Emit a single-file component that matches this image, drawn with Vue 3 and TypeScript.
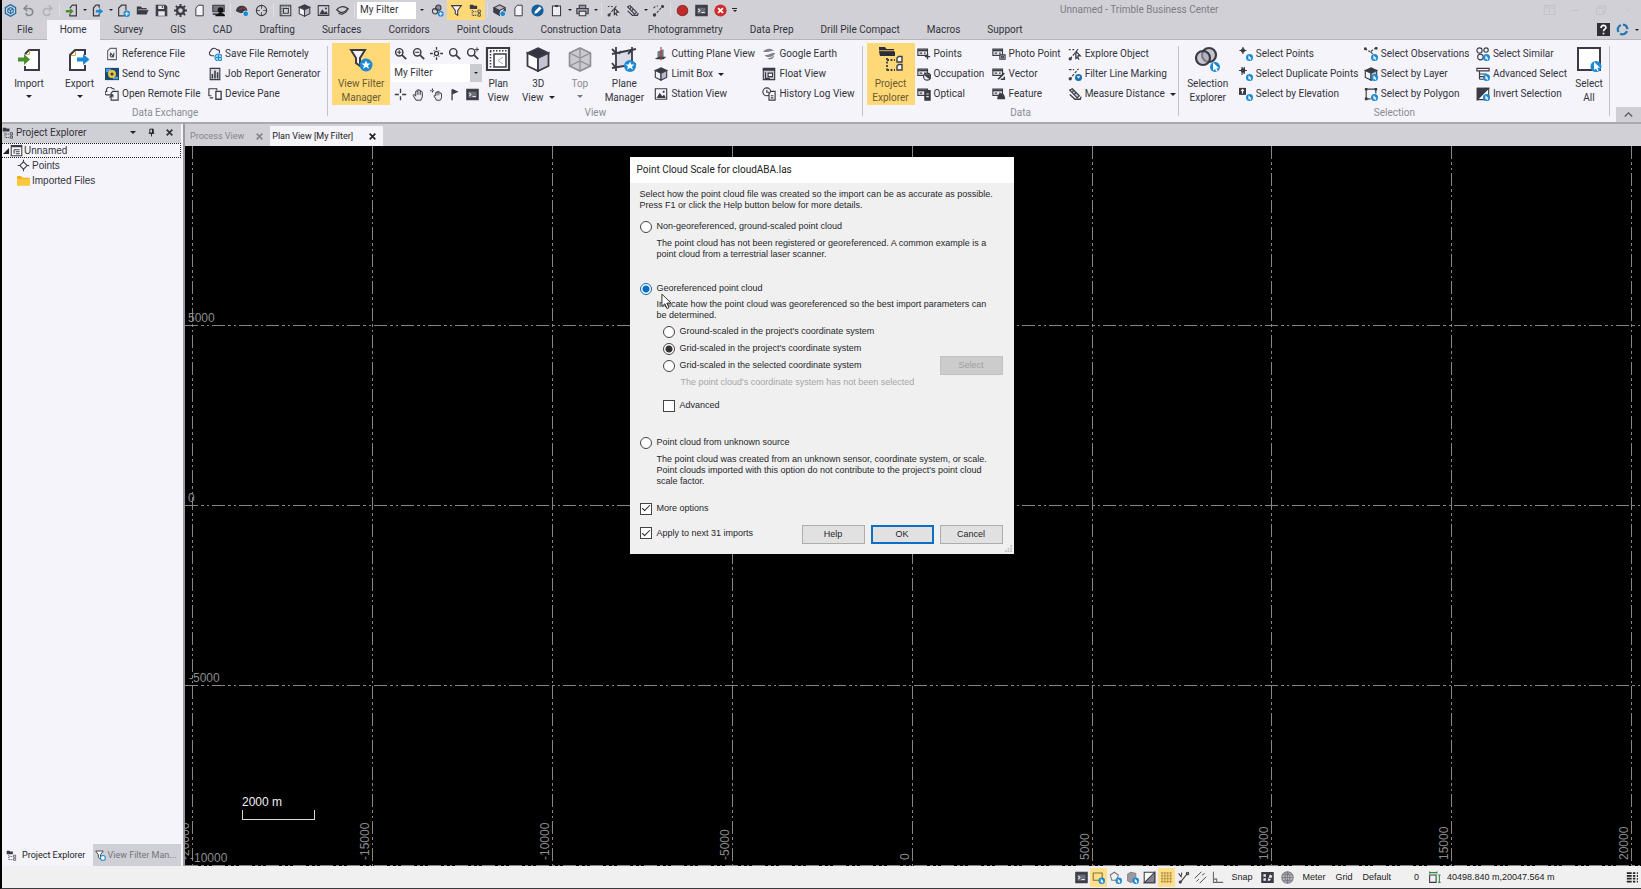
<script setup lang="ts">
import { ref } from 'vue'

interface Tool { icon: string; label: string; menu?: boolean }
interface Big { icon: string; lines: string[]; arrow?: boolean; inlineArrow?: boolean; active?: boolean; disabled?: boolean }
interface Column { big?: Big; stack?: Tool[]; viewTools?: boolean }
interface Group { id: string; label: string; columns: Column[] }
interface Quick { kind: 'icon' | 'arrow' | 'sep' | 'filter' | 'more'; icon?: string; on?: boolean }

const D = '#3b3b46'
const B = '#1b8ad3'
const pick = `<circle cx="12" cy="12" r="4" fill="${B}" stroke="none"/><path d="M10.8 9.4v5l1.2-1 .8 1.6.9-.4-.8-1.6h1.5z" fill="#fff" stroke="none"/>`
const card = `<path d="M1 2.5h11v7H1z"/><path d="M1 4h11" stroke-width="2"/><path d="M3 7h3M8 7h2"/>`
const cube = `<path d="M8 1l6.500 3L8 7.200 1.500 4z" fill="${D}"/><path d="M1.500 4v8L8 15V7.200z" fill="#f4f4fa"/><path d="M8 7.200L14.500 4v8L8 15z" fill="#b9b9c6"/>`
const picture = `<path d="M1.500 2h13v12h-13z"/><path d="M3 12.500l3.500-6 3 4 2-2 2 4z" fill="${D}" stroke="none"/><circle cx="11" cy="5.500" r="1.300" fill="${D}" stroke="none"/>`
const tree = `<path d="M1 1h4l1 1h4v4H1z" fill="${D}" stroke="none"/><path d="M4 7.500v6.500M5 9.500h4M5 14h4" stroke-dasharray="1.500 1.200"/><path d="M11 7.500h3v3h-3zM11 12h3v3h-3z" stroke-width="1"/>`
const lens = `<circle cx="6.500" cy="6.500" r="4.500" stroke-width="1.800"/><path d="M10 10l5 5" stroke-width="2.200"/>`
const chain = `<path d="M2 5l2-2M6 3l1-1M3 14L13 3" stroke-dasharray="3 1.500"/><circle cx="3" cy="13.500" r="1.400" fill="${D}"/><circle cx="13" cy="3" r="1.200" fill="${D}"/>`

const icons: Record<string, string> = {
  logo: `<path d="M8 .8l6.300 3.600v7.200L8 15.200l-6.300-3.600V4.400z" stroke="#1f6fa8" stroke-width="1.600"/><path d="M8 4.300l3.300 1.900v3.700L8 11.800l-3.300-1.900V6.200zM8 8v3.500M8 8l3-1.700M8 8L5 6.300" stroke="#1f6fa8" stroke-width="1.300"/>`,
  undo: `<path d="M3.500 5.500H9a4.300 4.300 0 1 1-4.200 5.500" stroke="#85858e" stroke-width="1.800"/><path d="M6.500 1.500L2.500 5.500l4 3.500" stroke="#85858e" stroke-width="1.800"/>`,
  redo: `<path d="M12.500 5.500H7a4.300 4.300 0 1 0 4.200 5.500" stroke="#b1b1b8" stroke-width="1.800"/><path d="M9.500 1.500l4 4-4 3.500" stroke="#b1b1b8" stroke-width="1.800"/>`,
  importS: `<path d="M6 5l3-3.500h5v13H6V12" stroke-width="1.500"/><path d="M1 7.500h5V5l4.500 4L6 13v-2.500H1z" fill="#4c8f2f" stroke="none"/>`,
  exportS: `<path d="M10 4.500V1.500H6L3 5v9.500h7V12" stroke-width="1.500"/><path d="M6 7.500h4V5l5 4-5 4v-2.500H6z" fill="${B}" stroke="none"/>`,
  newDoc: `<path d="M9 14.500H2V5l3.500-3.500H11V8" stroke-width="1.500"/><circle cx="12" cy="12" r="4" fill="${B}" stroke="none"/><path d="M12 9.500v5M9.500 12h5" stroke="#fff"/>`,
  folder: `<path d="M1 13V3h5l1.500 2H13v2h2.500L13 13z" fill="${D}" stroke="none"/><path d="M2.500 7h12" stroke="#d0d0d5" stroke-width=".8"/>`,
  save: `<path d="M1.500 1.500h11l2 2v11h-13z" fill="${D}"/><path d="M4 2h7v4H4zM4 9h8v5.500H4z" fill="#e6e6ec" stroke="none"/><path d="M9 2.500v2.500" />`,
  gear: `<circle cx="8" cy="8" r="4.300" stroke-width="3"/><path d="M8 0v3M8 13v3M0 8h3M13 8h3M2.300 2.300l2.200 2.200M11.500 11.500l2.200 2.200M2.300 13.700l2.200-2.200M11.500 4.500l2.200-2.200" stroke-width="2.400"/>`,
  page: `<path d="M3.500 5L6.500 1.500h6v13h-9z" fill="#f4f4f8" stroke-width="1.200"/>`,
  station: `<path d="M1 1.500h14v8H1z" fill="#77777f"/><circle cx="10.500" cy="7.500" r="3.500" fill="#111" stroke="none"/><path d="M4 15c0-3 3-4 6.500-4s5.500 1 5.500 4z" fill="#111" stroke="none"/><path d="M1 12.500h5" stroke-width="2"/>`,
  cloudScan: `<path d="M0 9c0-9 14-9 14 0l-4 2H5z" fill="${D}" stroke="none"/><path d="M4 7.500c1-2 4-3 7-2" stroke="#a33" /><circle cx="12" cy="12" r="3.500" fill="${B}" stroke="#fff" stroke-width=".8"/>`,
  target: `<circle cx="8" cy="8" r="6.300"/><path d="M8 1v5M8 10v5M1 8h5M10 8h5" stroke-width="1"/>`,
  plan: `<path d="M1.500 1.500h13v13h-13z"/><path d="M5.500 5.500h6v6h-6z"/><path d="M3.500 3v11M3 3.500h11" stroke-dasharray="1 1"/>`,
  cube, picture,
  surface: `<path d="M1 7c4-5 9-5 14-1-3 2-6 6-10 4-2-1-3-2-4-3z" stroke-width="1.600"/><path d="M3 11c3 3 8 1 11-3" stroke-width="1.400"/>`,
  link3: `<circle cx="9" cy="4.500" r="3.300" fill="#8d8d99"/><circle cx="5" cy="9" r="3.300"/><circle cx="12" cy="12" r="3.500" fill="${B}" stroke="none"/><path d="M12 10v4M10 12h4" stroke="#fff"/>`,
  funnel: `<path d="M2 2h12l-4.500 6v6l-3-2V8z" fill="#f7f0f7" stroke-width="1.300"/>`,
  tree,
  layers: `<path d="M8 1l7 3.500L8 8 1 4.500z" fill="#b9b9c6"/><path d="M1 5v5l7 4V8zM15 5v4L8 13" fill="${D}"/><circle cx="12" cy="12" r="3.500" fill="${B}" stroke="#fff" stroke-width=".8"/>`,
  pen: `<circle cx="8" cy="8" r="7.500" fill="#14609d" stroke="none"/><path d="M4 12l1-3.500L10.500 3l2.500 2.500L7.500 11z" fill="#fff" stroke="none"/>`,
  clip: `<path d="M3 2.500h10v12H3z" fill="#ececf2"/><path d="M6 2.500h4" stroke-width="2.500"/>`,
  print: `<path d="M4 5V1.500h8V5M1 5.500h14V12H1z" fill="#9a9aa4"/><path d="M4 9h8v5.500H4z" fill="#e6e6ec"/>`,
  explore: `<path d="M1 3h2M5 3h2M2 14L12 2" stroke-dasharray="4 1.500"/><circle cx="2.500" cy="13.500" r="1.200" fill="${D}"/><path d="M9 5v8l2-1.500 1.500 3M9 5l5 5h-3" stroke-width="1.500"/>`,
  measure: `<path d="M2 3.500L5 2l8 8-2.500 2.500z" fill="#c9c9d2"/><path d="M5 5.500L6.500 4M7.500 8L9 6.500M2 8.500L8 14h6l1-3" stroke-width="1.500"/>`,
  chain,
  record: `<circle cx="8" cy="8" r="6.500" fill="#c22a2a" stroke="#8a3030"/>`,
  terminal: `<path d="M1 1.500h14v13H1z" fill="${D}"/><path d="M3 4.500h10v7.500H3z" fill="#6c6c76" stroke="none"/><path d="M4 6l2 2-2 2M8 10.500h4" stroke="#e9e9ee"/>`,
  stop: `<circle cx="8" cy="8" r="7.500" fill="#cf2b2b" stroke="none"/><path d="M5 5l6 6M11 5l-6 6" stroke="#fff" stroke-width="2.200"/>`,
  refFile: `<path d="M3 4.500L6 1.500h7v13H3z" stroke="#66666f"/><path d="M6 6.500l4 5M10 6.500v3a2 2 0 0 1-4 0V8" stroke-width="1.200"/>`,
  sync: `<path d="M0 1h16v14H0z" fill="#18496f" stroke="none"/><path d="M1 2h6v4H1zM9 11h6v3H9z" fill="#4aa0dd" stroke="none"/><circle cx="8" cy="8" r="4.500" fill="#f2c23c" stroke="none"/><circle cx="8" cy="8" r="1.800" fill="#18496f" stroke="none"/>`,
  openRemote: `<path d="M6 9H2a2 2 0 0 1 0-4 3.500 3.500 0 0 1 6-3.500l3 1"/><path d="M7 7l2-2h6v10H7z" fill="#f4f4fa"/><path d="M5 12l4-3M9 12V9H6"/>`,
  saveRemote: `<path d="M7 10H4a3 3 0 0 1-1-5.500A4 4 0 0 1 10 3l3 1v3"/><circle cx="12" cy="12" r="4" fill="#a9d4f0" stroke="${B}"/><path d="M12 9v6M9 12h6" stroke="${B}"/>`,
  report: `<path d="M2.500 1.500h11v13h-11z" fill="#dcdce4"/><path d="M5 13V8M8 13V4M11 13V6" stroke-width="1.800"/>`,
  device: `<path d="M4 10H1V2h9v2M2 12.500h4"/><path d="M9 5h6v9H9z" fill="#f4f4fa" stroke-width="1.500"/>`,
  zoomIn: `${lens}<path d="M4 6.500h5M6.500 4v5" stroke-width="1.400"/>`,
  zoomOut: `${lens}<path d="M4 6.500h5" stroke-width="1.400"/>`,
  extents: `<circle cx="8" cy="8" r="2.500" stroke-width="1.600"/><path d="M8 0v3.500M8 12.500V16M0 8h3.500M12.500 8H16M4.500 4.500h1M10.500 11.500h1M4.500 11.500h1M10.500 4.500h1" stroke-width="1.600"/>`,
  zoom: lens,
  zoomPrev: `${lens}<path d="M11 3h5M13.500 .5v5" stroke-width="1.200"/>`,
  cross: `<path d="M8 1v5M8 10v5M1 8h5M10 8h5" stroke-width="1.600"/>`,
  hand: `<path d="M5 15L1.500 9.500c-.5-1.500 1-2 2-1L4.500 10V4.500c0-1.500 1.800-1.500 2 0V3c0-1.500 2-1.500 2 0v.5c.2-1.500 2-1.500 2 0V5c.3-1.300 2.200-1.300 2.200.5V11l-1.700 4z" fill="#ececf2" stroke-width="1.200"/><path d="M6.500 4.500v4M8.500 4v4.500M10.500 4.500v4" stroke-width=".9"/>`,
  hand2: `<path d="M0 3.500h6M3 .5v6" stroke-dasharray="2 1"/><path d="M8 15l-3-5c0-1.200 1-1.200 2-.5V6c0-1.300 1.600-1.300 1.800 0V5c.2-1.300 1.800-1.300 2 0v.7c.3-1 1.700-1 1.800.3v.8c.4-.8 1.600-.6 1.600.6V12l-1.500 3z" fill="#ececf2" stroke-width="1.200"/><path d="M8.800 6v3M10.800 6v3" stroke-width=".9"/>`,
  flag: `<path d="M5 2v13" stroke-width="1.600"/><path d="M5 1l8 3.500L5 8z" fill="${D}" stroke="none"/>`,
  cut: `<path d="M4 12V5l7-2.500v9z" fill="#6f7a80" stroke="none"/><path d="M1 13l5-2h8l-3 3H3z" fill="${D}" stroke="none"/><path d="M8 0v15" stroke="#a94444" stroke-width="1.300"/>`,
  earth: `<path d="M1 5c5-4 8-4 13-1-4 0-6 3-13 1zM3 9c5 1 7-3 12-2-2 4-6 5-10 4zM6 13c4 0 6-2 8-3-1 4-4 5-8 3z" fill="#80808a" stroke="none"/>`,
  float: `<path d="M1.500 1.500h13v13h-13z" fill="#c9c9d4"/><path d="M1 3h14" stroke-width="2.500"/><path d="M7 7h5v4H7z" fill="#fff"/><path d="M4 6v7h5"/>`,
  history: `<circle cx="5.500" cy="5.500" r="4.500"/><path d="M5.500 3v3h2.500"/><path d="M8 7.500L10 5h5v10H8z" fill="#f4f4fa"/><path d="M10 10h3M10 12.500h3"/>`,
  points: `${card}<path d="M12 8v6M9 11h6" stroke-width="1.500"/>`,
  occupation: `${card}<circle cx="11.500" cy="11" r="4" fill="#e8e8ee"/><path d="M9 9l5 4v-4z" fill="${D}"/>`,
  optical: `${card}<path d="M9 4h6v11H9z" fill="${D}"/><path d="M10.500 8h3M10.500 11h3" stroke="#ddd"/>`,
  photo: `${card}<path d="M9 9h6v5H9z" fill="#d9d9e0"/><circle cx="12" cy="11.500" r="1.200"/>`,
  vector: `${card}<path d="M7 14l7-7M10 14h4v-3" stroke-width="1.800"/>`,
  feature: `${card}<path d="M6 14c0-9 9-9 9 0z" fill="${D}" stroke="none"/>`,
  marking: `<path d="M1 3h6M2 14L12 2" stroke-dasharray="3 1.500"/><circle cx="2.500" cy="13.500" r="1.200" fill="${D}"/><circle cx="12" cy="12" r="4" fill="#1a6fae" stroke="none"/><path d="M10 10.500h4L12 13.500z" fill="#fff" stroke="none"/>`,
  selPoints: `<path d="M4.500 0v8M.5 4h8"/><circle cx="4.500" cy="4" r="1.800" fill="${D}"/>${pick}`,
  selDup: `<path d="M3.500 0v9M0 4h9M6 0v8"/><circle cx="4.700" cy="4" r="2" fill="${D}"/>${pick}`,
  selElev: `<path d="M0 1h8v8H0z" fill="${D}" stroke="none"/><path d="M4 7.500V3M2.500 4.500L4 3l1.500 1.500" stroke="#fff"/>${pick}`,
  selObs: `<path d="M1 2l6 3.500M14 1L7 5.500l4 3" stroke-dasharray="3 1.500"/><circle cx="1.500" cy="2" r="1" fill="${D}"/><circle cx="14" cy="1.500" r="1" fill="${D}"/>${pick}`,
  selLayer: `${cube}${pick}`,
  selPoly: `<path d="M2.500 2.500h11v5M2.500 2.500v11h5"/><path d="M1 1h3v3H1zM12 1h3v3h-3zM1 12h3v3H1z" fill="${D}" stroke="none"/>${pick}`,
  selSim: `<circle cx="4" cy="4" r="3"/><circle cx="11.500" cy="3.500" r="2.500"/><circle cx="5" cy="11.500" r="3.200"/>${pick}`,
  selAdv: `<path d="M1 1.500h14v3H1zM4 8h8M4 11h5M4 14h5M4 5v9"/>${pick}`,
  invert: `<path d="M1.500 1.500h13v13h-13z" fill="#fff"/><path d="M1.500 1.500h13l-13 13z" fill="${D}"/>${pick}`,
  selRect: `<path d="M1.500 2.500h11v9h-11z" stroke="#8a6d22"/>${pick}`,
  selHex: `<path d="M6.500 1.500l5 3.500-2 6.500h-6L1.500 5z" stroke="#777"/>${pick}`,
  selBox: `<path d="M2 4l4-2.500L12 3v8l-6 3-4-2z" fill="#9a9aa2" stroke="#888"/>${pick}`,
  half: `<path d="M1.500 1.500h13v13h-13z" fill="#fff"/><path d="M14.500 1.500v13h-13z" fill="#84848e"/>`,
  gridS: `<path d="M1 2.500h14M1 6h14M1 9.500h14M1 13h14M2.500 1v14M6 1v14M9.500 1v14M13 1v14" stroke="#b08f3a" stroke-width="1"/>`,
  snapA: `<path d="M4 14l9-11M2 3l3 4 1-5" stroke-width="1.300"/><circle cx="4" cy="13.500" r="1.300" fill="${D}"/><circle cx="13" cy="3" r="1.500"/>`,
  snapB: `<path d="M1 9l8-8M7 15l8-8M3 13l3-3M10 5l3-2" stroke-width="1.100"/>`,
  ortho: `<path d="M3 1v13h12M3 10h4v4" stroke="#66666e"/>`,
  keypad: `<path d="M1 2h14v12H1z" fill="${D}"/><path d="M3 4h3v3H3zM3 9h3v3H3z" fill="#eee" stroke="none"/><path d="M8 12l3-8 3 2-3 6z" fill="#eee" stroke="none"/><path d="M10 9h3"/>`,
  globe: `<circle cx="8" cy="8" r="7" fill="#b4b4ba" stroke="#77777f"/><path d="M1.500 8h13M8 1.500v13M3 4.500h10M3 11.500h10M8 1.500c-4 3-4 10 0 13M8 1.500c4 3 4 10 0 13" stroke="#6a6a72" stroke-width=".8"/>`,
  extent: `<path d="M2 5h8v9H2z"/><path d="M2 2h9M2 .5v3M11 .5v3M14 5v9M12.500 5h3M12.500 14h3" stroke="#2f8f3a"/>`,
  bars: `<path d="M1 2.500h6M1 6h6M1 9.500h6M1 13h6" stroke="#222" stroke-width="2.200"/><path d="M8.500 2.500h3M8.500 6h3M8.500 9.500h3M8.500 13h3" stroke="#222" stroke-width="2.200"/><path d="M14 1.500v13" stroke="#222" stroke-dasharray="2.300 1.200"/>`,
  treeRoot: `<path d="M1.500 2h13v12.500h-13z" fill="#fff"/><path d="M1.500 3h13" stroke-width="2"/><path d="M5 7h7M7 9.500h5M7 12h5M5 7v5"/>`,
  diamond: `<path d="M8 3.500l4.500 4.500L8 12.500 3.500 8z"/><path d="M8 1v3M8 12v3M1 8h3M12 8h3"/>`,
  yellow: `<path d="M0 14V2.500h5L7 4.500h8.500V14z" fill="#f3b11c" stroke="none"/><path d="M0 14V6h16v8z" fill="#fdc93c" stroke="none"/>`,
  funnelS: `<path d="M1 1.500h11L8 7v6l-3-2V7z" fill="#fff"/><circle cx="11.500" cy="11.500" r="3.500" fill="#fff" stroke="${B}" stroke-width="1.600"/>`,
  pin: `<path d="M5 2h6v7H5zM3 9.500h10M8 10v5" stroke="#111" stroke-width="1.500"/><path d="M10 2v7" stroke="#111" stroke-width="2"/>`,
  close: `<path d="M3 3l10 10M13 3L3 13" stroke="currentColor" stroke-width="3"/>`,
  help: `<path d="M0 0h16v16H0z" fill="#2e2e38" stroke="none"/><path d="M5 6c0-4 6-4 6-.5C11 8 8 7.500 8 10" stroke="#fff" stroke-width="2"/><path d="M8 12v2" stroke="#fff" stroke-width="2"/>`,
  swirl: `<path d="M3 11a6 6 0 0 1 3-8.500M8.500 2a6 6 0 0 1 5.500 5.500M13.500 10a6 6 0 0 1-8.500 3.200" stroke="#2277b5" stroke-width="2.800"/>`,
  up: `<path d="M3.500 10.500L8 6l4.500 4.500" stroke="#55555d" stroke-width="1.600"/>`,
  wRibbon: `<path d="M1.500 2h13v11h-13zM1.500 5h13M8 11V7" stroke="#c2c2c8"/>`,
  wMin: `<path d="M3 8h9" stroke="#c2c2c8"/>`,
  wMax: `<path d="M2 5h8v8H2zM5 5V2.500h8V10h-3" stroke="#c2c2c8"/>`,
  wClose: `<path d="M4 4l8 8M12 4l-8 8" stroke="#c9c9cf"/>`,
}

const big: Record<string, string> = {
  import: `<path d="M9 8l4-4h10v20H9v-4" fill="#fff" stroke-width="2"/><path d="M10 8.500h3.500V4.500" stroke="#d7a45a" stroke-width="1"/><path d="M2 11.500h6V8l6 5.500L8 19v-3.500H2z" fill="#4c8f2f" stroke="none"/>`,
  export: `<path d="M18 9V4H8L3 9v15h15v-5" fill="#fff" stroke-width="2"/><path d="M4 9.500h4.500V5" stroke="#d7a45a" stroke-width="1"/><path d="M10 11.500h6V8l6.500 5.500L16 19v-3.500h-6z" fill="${B}" stroke="none"/>`,
  funnel: `<path d="M3 4h14l-5 8v8l-4-3v-5z" fill="#f7f1f7" stroke-width="2"/><circle cx="18" cy="19" r="6.500" fill="${B}" stroke="none"/><path d="M18 14.500l1.300 3h3.200l-2.500 2 1 3.200-3-1.900-3 1.900 1-3.200-2.500-2h3.200z" fill="#fff" stroke="none"/>`,
  plan: `<path d="M2 2h22v22H2z" fill="#fff" stroke-width="2.200"/><path d="M9 8h12v13H9z" stroke-width="1.500"/><path d="M5.500 5v17M5 4.800h17" stroke-width="1.600" stroke-dasharray="1.500 1.500"/><path d="M18 11l-5 3.500 5 3.500" stroke="#aaa" stroke-width="1"/>`,
  cube: `<path d="M13 2l10.500 5L13 12 2.500 7z" fill="#353541"/><path d="M2.500 7v13L13 25V12z" fill="#fff" stroke-width="1.800"/><path d="M23.500 7v13L13 25V12z" fill="#c3c3d2" stroke-width="1.800"/>`,
  top: `<path d="M13 2l10.500 5v13L13 25 2.500 20V7z" fill="#c9c9ce" stroke="#8e8e94" stroke-width="1.600"/><path d="M2.500 7L13 12l10.500-5M13 12v13M2.500 20L13 15l10.500 5M13 2v13" stroke="#8e8e94" stroke-width="1.200"/>`,
  plane: `<path d="M5 7l16-3v14L5 22z" fill="#dcdce8" stroke="none"/><path d="M5 1v24M21 1v17M1 8l24-5M1 22l24-4M1 3l5 5M17 8l5-5M10 5l-2 3M1 17l4 5" stroke-width="1.800"/><circle cx="19" cy="20" r="6" fill="${B}" stroke="none"/><path d="M19 15.500l1.300 3h3.200l-2.500 2 1 3.200-3-1.900-3 1.900 1-3.200-2.500-2h3.200z" fill="#fff" stroke="none"/>`,
  project: `<path d="M1 1h6l1.500 2H16v3H1z" fill="#2d2d38" stroke="none"/><path d="M1 5.500h16v4.500H2z" fill="#2d2d38" stroke="none"/><path d="M1 4.700h15" stroke="#ffd978" stroke-width=".8"/><path d="M9 12v13M9 14h8M9 24h8" stroke-width="1.800" stroke-dasharray="2 1.500"/><path d="M19 12l1.500-1.500H24V16h-5zM19 20l1.500-1.500H24V24h-5z" fill="#fff" stroke-width="1.400"/>`,
  selection: `<circle cx="14" cy="9" r="7" fill="#c4c4d0" stroke-width="2.200"/><circle cx="8" cy="12" r="7" fill="#a9a9b8" fill-opacity=".6" stroke-width="2.200"/><circle cx="20" cy="21" r="5" fill="${B}" stroke="none"/><path d="M18 16.500v8l2-1.600 1.300 2.600 1.300-.7-1.200-2.500h2.600z" fill="#fff" stroke="none"/>`,
  all: `<path d="M2 2h22v22H2z" fill="#fff" stroke-width="2"/><circle cx="20" cy="20.500" r="5.500" fill="${B}" stroke="none"/><path d="M18 16v8l2-1.600 1.300 2.600 1.300-.7-1.200-2.500h2.600z" fill="#fff" stroke="none"/>`,
}

const q = (icon: string, on = false): Quick => ({ kind: 'icon', icon, on })
const arrow: Quick = { kind: 'arrow' }
const sep: Quick = { kind: 'sep' }
const quick: Quick[] = [
  q('logo'), q('undo'), q('redo'), sep, q('importS'), arrow, q('exportS'), arrow, q('newDoc'), q('folder'), q('save'), q('gear'),
  q('page'), q('station'), sep, q('cloudScan'), q('target'), sep, q('plan'), q('cube'), q('picture'), q('surface'), sep,
  { kind: 'filter' }, q('link3'), q('funnel', true), q('tree', true), sep, q('layers'), q('page'), q('pen'), q('clip'), arrow,
  q('print'), arrow, sep, q('explore'), q('measure'), arrow, q('chain'), sep, q('record'), q('terminal'), q('stop'), { kind: 'more' },
]

const tabs = ['File', 'Home', 'Survey', 'GIS', 'CAD', 'Drafting', 'Surfaces', 'Corridors', 'Point Clouds', 'Construction Data',
  'Photogrammetry', 'Data Prep', 'Drill Pile Compact', 'Macros', 'Support']
const activeTab = ref('Home')

const s = (...items: [string, string, boolean?][]): Column => ({ stack: items.map(([icon, label, menu]) => ({ icon, label, menu })) })
const groups: Group[] = [
  {
    id: 'exchange', label: 'Data Exchange', columns: [
      { big: { icon: 'import', lines: ['Import'], arrow: true } },
      { big: { icon: 'export', lines: ['Export'], arrow: true } },
      s(['refFile', 'Reference File'], ['sync', 'Send to Sync'], ['openRemote', 'Open Remote File']),
      s(['saveRemote', 'Save File Remotely'], ['report', 'Job Report Generator'], ['device', 'Device Pane']),
    ],
  },
  {
    id: 'view', label: 'View', columns: [
      { big: { icon: 'funnel', lines: ['View Filter', 'Manager'], active: true } },
      { viewTools: true },
      { big: { icon: 'plan', lines: ['Plan', 'View'] } },
      { big: { icon: 'cube', lines: ['3D', 'View'], inlineArrow: true } },
      { big: { icon: 'top', lines: ['Top'], arrow: true, disabled: true } },
      { big: { icon: 'plane', lines: ['Plane', 'Manager'] } },
      s(['cut', 'Cutting Plane View'], ['cube', 'Limit Box', true], ['picture', 'Station View']),
      s(['earth', 'Google Earth'], ['float', 'Float View'], ['history', 'History Log View']),
    ],
  },
  {
    id: 'data', label: 'Data', columns: [
      { big: { icon: 'project', lines: ['Project', 'Explorer'], active: true } },
      s(['points', 'Points'], ['occupation', 'Occupation'], ['optical', 'Optical']),
      s(['photo', 'Photo Point'], ['vector', 'Vector'], ['feature', 'Feature']),
      s(['explore', 'Explore Object'], ['marking', 'Filter Line Marking'], ['measure', 'Measure Distance', true]),
    ],
  },
  {
    id: 'selection', label: 'Selection', columns: [
      { big: { icon: 'selection', lines: ['Selection', 'Explorer'] } },
      s(['selPoints', 'Select Points'], ['selDup', 'Select Duplicate Points'], ['selElev', 'Select by Elevation']),
      s(['selObs', 'Select Observations'], ['selLayer', 'Select by Layer'], ['selPoly', 'Select by Polygon']),
      s(['selSim', 'Select Similar'], ['selAdv', 'Advanced Select'], ['invert', 'Invert Selection']),
      { big: { icon: 'all', lines: ['Select', 'All'] } },
    ],
  },
]
const zoomTools = ['zoomIn', 'zoomOut', 'extents', 'zoom', 'zoomPrev']
const panTools = ['cross', 'hand', 'hand2', 'flag', 'terminal']

const verticals = [-20000, -15000, -10000, -5000, 0, 5000, 10000, 15000, 20000].map((v, i) => ({ label: String(v), x: 7 + Math.round(i * 179.9) }))
const horizontals = [
  { label: '5000', y: 179, lx: 3 },
  { label: '0', y: 359, lx: 3 },
  { label: '-5000', y: 539, lx: 4 },
  { label: '-10000', y: 719, lx: 5 },
]

const statusTools = [
  { icon: 'terminal' }, { icon: 'selRect', on: true }, { icon: 'selHex' }, { icon: 'selBox' }, { icon: 'half' },
  { icon: 'gridS', on: true }, { icon: 'snapA' }, { icon: 'snapB' }, { icon: 'ortho' },
]

const source = ref('geo')
const scaling = ref('grid')
const advanced = ref(false)
const moreOptions = ref(true)
const applyNext = ref(true)
const filter = ref('My Filter')
</script>

<template>
  <div class="app">
    <header class="title">
      <template v-for="(it, i) in quick" :key="i">
        <button v-if="it.kind === 'icon'" class="q" :class="{ on: it.on }" :aria-label="it.icon">
          <svg class="i" viewBox="0 0 16 16" v-html="icons[it.icon!]" />
        </button>
        <span v-else-if="it.kind === 'arrow'" class="q-arrow"><i class="tri" /></span>
        <button v-else-if="it.kind === 'more'" class="q-more" aria-label="Customize toolbar"><i class="tri" /></button>
        <span v-else-if="it.kind === 'sep'" class="q-sep" />
        <span v-else class="q-filter">
          <select v-model="filter" aria-label="Current filter"><option>My Filter</option></select>
          <i class="tri" />
        </span>
      </template>
      <h1>Unnamed - Trimble Business Center</h1>
      <div class="win">
        <button v-for="w in ['wRibbon', 'wMin', 'wMax', 'wClose']" :key="w" :aria-label="w"><svg class="i" viewBox="0 0 16 16" v-html="icons[w]" /></button>
      </div>
    </header>

    <nav class="tabs">
      <button v-for="t in tabs" :key="t" :class="{ active: t === activeTab }" @click="activeTab = t">{{ t }}</button>
      <div class="tabs-end">
        <button aria-label="Help"><svg class="i" viewBox="0 0 16 16" v-html="icons.help" /></button>
        <button aria-label="Connect"><svg class="i" viewBox="0 0 16 16" v-html="icons.swirl" /></button>
        <i class="tri" />
      </div>
    </nav>

    <section class="ribbon">
      <div v-for="g in groups" :key="g.id" class="group">
        <div class="tools" :class="g.id">
          <template v-for="(c, i) in g.columns" :key="i">
            <button v-if="c.big" class="big" :class="{ active: c.big.active, dim: c.big.disabled }">
              <svg class="i" viewBox="0 0 26 26" v-html="big[c.big.icon]" />
              <span v-for="(l, n) in c.big.lines" :key="l">{{ l }}<i v-if="c.big.inlineArrow && n === 1" class="tri after" /></span>
              <span v-if="c.big.arrow"><i class="tri" /></span>
            </button>
            <div v-else-if="c.viewTools" class="view-tools">
              <div class="icon-row"><button v-for="z in zoomTools" :key="z" :aria-label="z"><svg class="i" viewBox="0 0 16 16" v-html="icons[z]" /></button></div>
              <div class="combo">
                <select v-model="filter" aria-label="View filter"><option>My Filter</option></select>
                <span><i class="tri" /></span>
              </div>
              <div class="icon-row"><button v-for="z in panTools" :key="z" :aria-label="z"><svg class="i" viewBox="0 0 16 16" v-html="icons[z]" /></button></div>
            </div>
            <div v-else class="stack">
              <button v-for="t in c.stack" :key="t.label">
                <svg class="i" viewBox="0 0 16 16" v-html="icons[t.icon]" />
                <span>{{ t.label }}</span>
                <i v-if="t.menu" class="tri" />
              </button>
            </div>
          </template>
        </div>
        <p>{{ g.label }}</p>
      </div>
      <button class="collapse" aria-label="Collapse ribbon"><svg class="i" viewBox="0 0 16 16" v-html="icons.up" /></button>
    </section>

    <main class="work">
      <aside class="panel">
        <header>
          <svg class="i" viewBox="0 0 16 16" v-html="icons.tree" />
          <h2>Project Explorer</h2>
          <button aria-label="Panel menu"><i class="tri" /></button>
          <button aria-label="Pin"><svg class="i" viewBox="0 0 16 16" v-html="icons.pin" /></button>
          <button aria-label="Close panel"><svg class="i" viewBox="0 0 16 16" v-html="icons.close" /></button>
        </header>
        <ul>
          <li class="root"><i class="expander" /><svg class="i" viewBox="0 0 16 16" v-html="icons.treeRoot" />Unnamed</li>
          <li><svg class="i" viewBox="0 0 16 16" v-html="icons.diamond" />Points</li>
          <li><svg class="i" viewBox="0 0 16 16" v-html="icons.yellow" />Imported Files</li>
        </ul>
        <footer>
          <button class="active"><svg class="i" viewBox="0 0 16 16" v-html="icons.tree" />Project Explorer</button>
          <button><svg class="i" viewBox="0 0 16 16" v-html="icons.funnelS" />View Filter Man...</button>
        </footer>
      </aside>

      <section class="docs">
        <div class="doc-tabs">
          <div>
            <button>Process View</button>
            <button class="x" aria-label="Close Process View"><svg class="i" viewBox="0 0 16 16" v-html="icons.close" /></button>
          </div>
          <div class="active">
            <button>Plan View [My Filter]</button>
            <button class="x" aria-label="Close Plan View"><svg class="i" viewBox="0 0 16 16" v-html="icons.close" /></button>
          </div>
        </div>
        <svg class="canvas">
          <g class="grid">
            <line v-for="v in verticals" :key="v.label" :x1="v.x" :x2="v.x" y1="0" y2="100%" />
            <line v-for="h in horizontals" :key="h.label" x1="0" x2="100%" :y1="h.y" :y2="h.y" />
          </g>
          <g class="marks">
            <text v-for="h in horizontals" :key="h.label" :x="h.lx" :y="h.y - 3">{{ h.label }}</text>
            <text v-for="v in verticals" :key="v.label" :transform="`translate(${v.x - 3} 714) rotate(-90)`">{{ v.label }}</text>
          </g>
          <text class="scale" x="57" y="660">2000 m</text>
          <path class="scale-bar" d="M57 664v9h72v-9" />
        </svg>
      </section>
    </main>

    <footer class="status">
      <button v-for="t in statusTools" :key="t.icon" :class="{ on: t.on }" :aria-label="t.icon"><svg class="i" viewBox="0 0 16 16" v-html="icons[t.icon]" /></button>
      <span>Snap</span>
      <button class="wide" aria-label="Keypad"><svg class="i" viewBox="0 0 16 16" v-html="icons.keypad" /></button>
      <button class="wide" aria-label="Coordinate system"><svg class="i" viewBox="0 0 16 16" v-html="icons.globe" /></button>
      <span>Meter</span><span>Grid</span><span>Default</span>
      <span class="count">0</span>
      <button class="wide" aria-label="Extents"><svg class="i" viewBox="0 0 16 16" v-html="icons.extent" /></button>
      <output>40498.840 m,20047.564 m</output>
      <svg class="i" viewBox="0 0 16 16" v-html="icons.bars" />
    </footer>

    <form class="dialog" role="dialog" aria-labelledby="dlg-title" @submit.prevent>
      <h2 id="dlg-title">Point Cloud Scale for cloudABA.las</h2>
      <div class="body">
        <p>Select how the point cloud file was created so the import can be as accurate as possible.<br>Press F1 or click the Help button below for more details.</p>

        <label class="opt first"><input v-model="source" type="radio" name="source" value="none">Non-georeferenced, ground-scaled point cloud</label>
        <p class="desc">The point cloud has not been registered or georeferenced. A common example is a<br>point cloud from a terrestrial laser scanner.</p>

        <label class="opt second"><input v-model="source" class="hot" type="radio" name="source" value="geo">Georeferenced point cloud</label>
        <p class="desc near">Indicate how the point cloud was georeferenced so the best import parameters can<br>be determined.</p>
        <div class="sub">
          <label class="opt"><input v-model="scaling" type="radio" name="scaling" value="ground">Ground-scaled in the project's coordinate system</label>
          <label class="opt"><input v-model="scaling" type="radio" name="scaling" value="grid">Grid-scaled in the project's coordinate system</label>
          <div class="with-button">
            <label class="opt"><input v-model="scaling" type="radio" name="scaling" value="selected">Grid-scaled in the selected coordinate system</label>
            <button type="button" disabled>Select</button>
          </div>
          <p class="hint">The point cloud's coordinate system has not been selected</p>
          <label class="opt adv"><input v-model="advanced" type="checkbox">Advanced</label>
        </div>

        <label class="opt third"><input v-model="source" type="radio" name="source" value="unknown">Point cloud from unknown source</label>
        <p class="desc">The point cloud was created from an unknown sensor, coordinate system, or scale.<br>Point clouds imported with this option do not contribute to the project's point cloud<br>scale factor.</p>

        <label class="opt more"><input v-model="moreOptions" type="checkbox">More options</label>
        <div class="actions">
          <label class="opt"><input v-model="applyNext" type="checkbox">Apply to next 31 imports</label>
          <button type="button">Help</button>
          <button type="submit" class="primary">OK</button>
          <button type="button">Cancel</button>
        </div>
      </div>
      <svg class="grip" viewBox="0 0 8 8"><path d="M6 0h2v2H6zM3 3h2v2H3zM6 3h2v2H6zM0 6h2v2H0zM3 6h2v2H3zM6 6h2v2H6z" /></svg>
      <svg class="cursor" viewBox="0 0 12 18"><path d="M1 1v13.500l3.200-3 2.300 5.200 2.200-1-2.300-5H11z" /></svg>
    </form>
  </div>
</template>

<style>
body { margin: 0; }
</style>

<style scoped>
.app {
  position: relative;
  display: flex;
  flex-direction: column;
  height: 100vh;
  box-sizing: border-box;
  border-left: 2px solid #000;
  border-bottom: 1px solid #3a3a3e;
  overflow: hidden;
  background: #d0d0d6;
  color: #33333b;
  font: 10px/14px Roboto, "Liberation Sans", sans-serif;
}
button, select, input { font: inherit; color: inherit; margin: 0; }
button { padding: 0; border: 0; background: none; white-space: nowrap; }
h1, h2, p, ul { margin: 0; padding: 0; font: inherit; list-style: none; }
.i { display: block; flex: none; width: 13px; height: 13px; fill: none; stroke: #3b3b46; stroke-width: 1.3; }
.tri { display: inline-block; border: 3px solid transparent; border-top-color: #222; border-bottom: 0; }

/* title bar */
.title { display: flex; align-items: center; height: 20px; }
.title > .q:first-child { width: 17px; }
.q { display: grid; place-items: center; flex: none; width: 19px; height: 20px; }
.q.on { background: #ffd978; }
.q-arrow { flex: none; width: 7px; display: grid; place-items: center; }
.q-arrow .tri, .q-filter .tri, .q-more .tri { border-width: 2px; border-bottom: 0; }
.q-more { display: grid; justify-items: center; gap: 1px; flex: none; width: 9px; }
.q-more::before { content: ""; width: 5px; height: 1px; background: #222; }
.q-sep { flex: none; width: 1px; height: 14px; margin: 0 2px; background: #dedee4; }
.q-filter { display: flex; align-items: center; flex: none; gap: 4px; width: 71px; }
.q-filter select { appearance: none; width: 59px; height: 17px; padding: 0 3px; border: 0; border-radius: 0; background: #fff; }
.title h1 { flex: 1; padding-left: 321px; color: #7d7d85; white-space: nowrap; }
.win { display: flex; gap: 13px; padding-right: 7px; }

/* tab row */
.tabs { display: flex; gap: 1px; height: 19px; padding-left: 2px; border-bottom: 1px solid #b4b4ba; }
.tabs > button { padding: 0 13px; line-height: 20px; height: 20px; }
.tabs > .active { background: #f4f4fa; }
.tabs-end { display: flex; align-items: center; gap: 6px; margin-left: auto; padding-right: 2px; }
.tabs-end .tri { border-width: 2px; border-bottom: 0; }

/* ribbon */
.ribbon { display: grid; grid-template-columns: 326fr 534fr 316fr 431fr 31fr; height: 82px; border-bottom: 2px solid #a9a9ae; background: #f4f4fa; }
.group { position: relative; min-width: 0; }
.group::after { content: ""; position: absolute; right: 0; top: 6px; bottom: 6px; width: 1px; background: #c3c3ca; }
.group > p { text-align: center; color: #8b8b93; line-height: 14px; }
.tools { display: grid; height: 63px; padding-top: 3px; }
.exchange { grid-template-columns: 54fr 47fr 103fr 122fr; }
.view { grid-template-columns: 58fr 93fr 30fr 50fr 33fr 56fr 108fr 102fr; padding-left: 4px; }
.data { grid-template-columns: 48fr 75fr 76fr 113fr; padding-left: 4px; }
.selection { grid-template-columns: 58fr 125fr 112fr 94fr 42fr; }
.tools > * { min-width: 0; }
.big { display: flex; flex-direction: column; align-items: center; padding-top: 3px; }
.big .i { width: 26px; height: 26px; margin-bottom: 5px; stroke-width: 1.5; }
.big span { line-height: 14px; }
.big .tri { vertical-align: 3px; }
.big .after { margin-left: 5px; vertical-align: 2px; }
.big.active { height: 62px; background: #ffd978; color: #6a5a34; }
.big.dim { color: #8b8b93; }
.big.dim .tri { border-top-color: #77777f; }
.stack { padding-top: 1px; }
.stack > button { display: flex; align-items: center; gap: 3px; height: 20px; padding-left: 2px; }
.stack .i { width: 14px; height: 14px; }
.stack .tri { margin-left: 2px; }
.view-tools { padding-left: 1px; }
.icon-row { display: flex; height: 21px; }
.icon-row button { display: grid; place-items: center; width: 18px; }
.combo { display: flex; height: 18px; width: 91px; margin: 0 0 2px; background: #fff; }
.combo select { appearance: none; flex: 1; min-width: 0; padding: 0 3px; border: 0; background: none; }
.combo span { display: grid; place-items: center; width: 12px; background: #cbcbd2; }
.combo .tri { border-width: 2px; border-bottom: 0; }
.collapse { align-self: end; justify-self: end; display: grid; place-items: center; width: 25px; height: 15px; background: #cfcfd5; }

/* work area */
.work { display: flex; flex: 1; min-height: 0; }
.panel { display: flex; flex-direction: column; flex: none; width: 179px; padding-right: 2px; border-right: 2px solid #9a9aa0; background: #f4f4fa; }
.panel > header { display: flex; align-items: center; box-sizing: border-box; height: 19px; padding: 0 3px 2px 0; background: #cfcfd6; }
.panel h2 { flex: 1; padding-left: 2px; }
.panel > header button { display: grid; place-items: center; width: 18px; }
.panel > header .i { width: 12px; height: 12px; }
.panel > header button .i { width: 9px; height: 9px; }
.panel ul { flex: 1; font: 10px/15px "Liberation Sans", Arial, sans-serif; }
.panel li { display: flex; align-items: center; gap: 2px; height: 15px; padding-left: 15px; box-sizing: border-box; }
.panel li.root { gap: 1px; padding-left: 1px; border: 1px dotted #222; border-left: 0; }
.expander { border: 3px solid #222; border-top-color: transparent; border-left-color: transparent; }
.panel > footer { display: flex; height: 22px; font-size: 9px; }
.panel > footer button { flex: 1 1 0; display: flex; align-items: center; gap: 2px; padding-left: 2px; background: #cfcfd6; color: #74747c; }
.panel > footer .active { padding-left: 4px; gap: 5px; background: none; color: #222; }
.panel > footer .i { width: 11px; height: 11px; }
.docs { display: flex; flex-direction: column; flex: 1; min-width: 0; }
.doc-tabs { display: flex; height: 20px; padding-top: 2px; font-size: 9px; }
.doc-tabs > div { display: flex; align-items: center; padding: 0 6px 0 5px; gap: 11px; color: #85858d; }
.doc-tabs > .active { padding: 0 6px 0 2px; gap: 15px; background: #f4f4fa; color: #222; }
.doc-tabs .x .i { width: 9px; height: 9px; }
.canvas { flex: 1; width: 100%; min-height: 0; background: #000; }
.grid line { stroke: #858585; stroke-dasharray: 13 3 3 3 2 3; shape-rendering: crispEdges; }
.marks text { fill: #8c8c8c; font: 12px "Liberation Sans", Arial, sans-serif; }
.scale { fill: #f2f2f2; font: 12px "Liberation Sans", Arial, sans-serif; }
.scale-bar { fill: none; stroke: #d8d8d8; shape-rendering: crispEdges; }

/* status bar */
.status { display: flex; align-items: center; justify-content: flex-end; height: 22px; background: #f0f0f0; color: #222; font: 9px/20px "Liberation Sans", Arial, sans-serif; }
.status button { display: grid; place-items: center; width: 17px; height: 19px; }
.status .wide { width: 20px; }
.status .on { background: #ffe08f; }
.status span { padding: 0 5px; }
.status .count { width: 18px; text-align: right; }
.status output { width: 179px; padding-left: 3px; }
.status > .i { margin-right: 2px; }

/* dialog */
.dialog { position: absolute; top: 157px; left: calc(50% - 192px); width: 384px; background: #f0f0f0; color: #26262a; }
.dialog h2 { height: 26px; line-height: 26px; padding-left: 7px; background: #fff; color: #222; }
.body { padding: 6px 11px 10px 10px; font: 9px/11px "Liberation Sans", Arial, sans-serif; white-space: nowrap; }
.opt { display: flex; align-items: center; gap: 5px; height: 13px; }
.opt input { appearance: none; box-sizing: border-box; flex: none; width: 12px; height: 12px; border: 1px solid #444; background: #fff; }
.opt input[type="radio"] { border-radius: 50%; }
.opt input[type="radio"]:checked { background: radial-gradient(circle, #333 3px, #fff 4px); }
.opt input.hot:checked { border-color: #0a6cbd; background: radial-gradient(circle, #0a6cbd 3px, #fff 4px); }
.opt input[type="checkbox"] { display: grid; place-items: center; }
.opt input[type="checkbox"]:checked::after { content: ""; width: 7px; height: 3px; margin-top: -3px; border: solid #222; border-width: 0 0 1px 1px; transform: rotate(-45deg); }
.first { margin-top: 9px; }
.second { margin-top: 22px; }
.third { margin-top: 24px; }
.more { margin-top: 15px; }
.desc { margin-top: 5px; padding-left: 17px; }
.desc.near { margin-top: 4px; }
.sub { display: flex; flex-direction: column; gap: 4px; margin-top: 4px; padding-left: 23px; }
.with-button { display: flex; align-items: center; justify-content: space-between; height: 13px; }
.hint { padding: 1px 0 0 18px; color: #a5a5a5; }
.adv { margin-top: 7px; }
.actions { display: flex; align-items: center; gap: 6px; margin-top: 10px; }
.actions .opt { flex: 1; margin-bottom: 3px; }
.body button { box-sizing: border-box; width: 63px; height: 19px; border: 1px solid #adadad; background: #e1e1e1; }
.body button.primary { border: 2px solid #0f6fc4; }
.body button:disabled { border-color: #c2c2c2; background: #cccccc; color: #a0a0a0; }
.grip { position: absolute; right: 2px; bottom: 2px; width: 7px; height: 7px; fill: #c0c0c0; }
.cursor { position: absolute; left: 31px; top: 136px; width: 11px; height: 17px; fill: #fff; stroke: #222; }
</style>
